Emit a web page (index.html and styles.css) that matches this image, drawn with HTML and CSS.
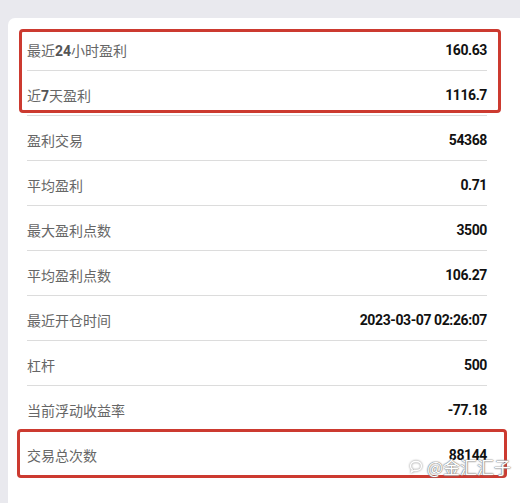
FILE: index.html
```html
<!DOCTYPE html>
<html lang="zh">
<head>
<meta charset="utf-8">
<link rel="stylesheet" href="styles.css">
</head>
<body>
<div class="card">
  <div class="row"><span class="label">最近<b>24</b>小时盈利</span><span class="value">160.63</span></div>
  <div class="row"><span class="label">近<b>7</b>天盈利</span><span class="value">1116.7</span></div>
  <div class="row"><span class="label">盈利交易</span><span class="value">54368</span></div>
  <div class="row"><span class="label">平均盈利</span><span class="value">0.71</span></div>
  <div class="row"><span class="label">最大盈利点数</span><span class="value">3500</span></div>
  <div class="row"><span class="label">平均盈利点数</span><span class="value">106.27</span></div>
  <div class="row"><span class="label">最近开仓时间</span><span class="value">2023-03-07 02:26:07</span></div>
  <div class="row"><span class="label">杠杆</span><span class="value">500</span></div>
  <div class="row"><span class="label">当前浮动收益率</span><span class="value">-77.18</span></div>
  <div class="row last"><span class="label">交易总次数</span><span class="value">88144</span></div>
  <div class="mark mark-top"></div>
  <div class="mark mark-bottom"></div>
  <div class="watermark">
    <svg class="wm-icon" width="16" height="16" viewBox="0 0 16 16"><path d="M8 2.5c3.3 0 5.5 2 5.5 4.5S11.3 11.5 8 11.5c-.6 0-1.2-.1-1.7-.2L3.5 13l.7-2.6C3.1 9.6 2.5 8.4 2.5 7 2.5 4.5 4.7 2.5 8 2.5z" fill="none" stroke="#fff" stroke-width="1.3"/></svg>
    <span>@金汇汇子</span>
  </div>
</div>
</body>
</html>
```
FILE: styles.css
```css
html, body {
  margin: 0;
  padding: 0;
}
body {
  background: #e9e9ee;
  font-family: "Noto Sans CJK SC", "Noto Sans", sans-serif;
  padding-top: 18px;
  padding-left: 8px;
  height: 485px;
  overflow: hidden;
}
.card {
  position: relative;
  background: #fff;
  border-radius: 7px 0 0 7px;
  padding: 8px 33px 0 19px;
  height: 500px;
}
.row {
  box-sizing: border-box;
  height: 45px;
  padding-top: 3px;
  border-bottom: 1px solid #dcdcdc;
  display: flex;
  align-items: center;
  justify-content: space-between;
}
.row.last {
  border-bottom: none;
}
.label {
  font-size: 14px;
  color: #666;
}
.label b {
  font-family: Roboto, sans-serif;
  font-weight: 700;
  color: #555;
}
.value {
  font-family: Roboto, sans-serif;
  font-weight: 700;
  font-size: 14px;
  letter-spacing: -0.4px;
  color: #111;
}
.mark {
  position: absolute;
  border: 3px solid #cc3a30;
  border-radius: 4px;
}
.mark-top {
  left: 11px;
  top: 11px;
  width: 476px;
  height: 78px;
}
.mark-bottom {
  left: 9px;
  top: 411px;
  width: 484px;
  height: 43px;
}
.watermark {
  position: absolute;
  left: 400px;
  top: 440px;
  line-height: 18px;
  display: flex;
  align-items: center;
  gap: 3px;
  color: #fff;
  font-size: 17px;
  text-shadow: 0 0 1px #777, 0 0 1px #777, 0 0 2px #999;
}
.wm-icon {
  filter: drop-shadow(0 0 1px #777);
}
```
